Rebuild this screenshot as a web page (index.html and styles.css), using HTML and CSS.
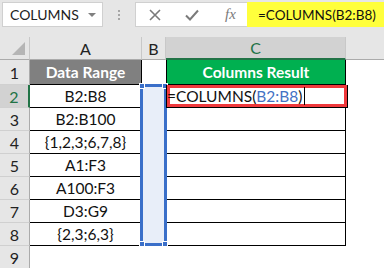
FILE: index.html
```html
<!DOCTYPE html>
<html lang="en">
<head>
    <meta charset="UTF-8">
    <title>COLUMNS</title>
    <link rel="stylesheet" href="styles.css">
</head>
<body>
    <div class="app">
        <!-- Formula bar -->
        <div class="formula-bar">
            <div class="name-box">
                <span>COLUMNS</span>
                <svg class="drop" width="8" height="4" viewBox="0 0 8 4"><path d="M0 0H8L4 4Z" fill="#808080"/></svg>
            </div>
            <div class="grip"><i></i><i></i><i></i></div>
            <div class="fx-box">
                <svg width="12" height="12" viewBox="0 0 12 12"><path d="M1 1L11 11M11 1L1 11" stroke="#7a7a7a" stroke-width="1.6" fill="none"/></svg>
                <svg width="14" height="12" viewBox="0 0 14 12"><path d="M1 6.5L5 10.5L13 1.5" stroke="#7a7a7a" stroke-width="2" fill="none"/></svg>
                <span class="fx">fx</span>
            </div>
            <div class="formula">=COLUMNS(B2:B8)</div>
        </div>

        <!-- Sheet -->
        <div class="sheet">
            <div class="hd corner"><span class="tri"></span></div>
            <div class="hd col">A</div>
            <div class="hd col">B</div>
            <div class="hd col active-col">C</div>
            <div class="hd rest"></div>

            <div class="rh">1</div>
            <div class="cell a title-grey">Data Range</div>
            <div class="cell b"></div>
            <div class="cell c title-green">Columns Result</div>
            <div class="cell rest"></div>

            <div class="rh active-row">2</div>
            <div class="cell a">B2:B8</div>
            <div class="sel">
                <span class="h tl"></span><span class="h tr"></span>
                <span class="h bl"></span><span class="h br"></span>
            </div>
            <div class="cell c editing">=COLUMNS(<span class="ref">B2:B8</span>)<span class="cursor"></span></div>
            <div class="cell rest"></div>

            <div class="rh">3</div>
            <div class="cell a">B2:B100</div>
            <div class="cell c"></div>
            <div class="cell rest"></div>

            <div class="rh">4</div>
            <div class="cell a">{1,2,3;6,7,8}</div>
            <div class="cell c"></div>
            <div class="cell rest"></div>

            <div class="rh">5</div>
            <div class="cell a">A1:F3</div>
            <div class="cell c"></div>
            <div class="cell rest"></div>

            <div class="rh">6</div>
            <div class="cell a">A100:F3</div>
            <div class="cell c"></div>
            <div class="cell rest"></div>

            <div class="rh">7</div>
            <div class="cell a">D3:G9</div>
            <div class="cell c"></div>
            <div class="cell rest"></div>

            <div class="rh">8</div>
            <div class="cell a">{2,3;6,3}</div>
            <div class="cell c"></div>
            <div class="cell rest"></div>

            <div class="rh">9</div>
            <div class="cell blank"></div>
            <div class="cell blank"></div>
            <div class="cell blank"></div>
            <div class="cell rest"></div>
        </div>
    </div>
</body>
</html>
```

FILE: styles.css
```css
body {
    margin: 0;
    font-family: Lato, "Open Sans", sans-serif;
    background-color: #ffffff;
}

.app {
    width: 384px;
    height: 268px;
    overflow: hidden;
    background-color: #e6e6e6;
}

/* Formula bar */
.formula-bar {
    display: flex;
    height: 25px;
    padding-top: 2px;
    margin-bottom: 10px;
}

.name-box {
    width: 101px;
    margin-left: 2px;
    box-sizing: border-box;
    background-color: white;
    border: 1px solid #d0d0d0;
    display: flex;
    align-items: center;
    justify-content: space-between;
    padding: 0 6px 0 7px;
    font-size: 14px;
    color: #222;
}

.grip {
    width: 32px;
    display: flex;
    flex-direction: column;
    align-items: center;
    justify-content: center;
    gap: 2px;
}

.grip i {
    width: 2px;
    height: 2px;
    background-color: #a6a6a6;
}

.fx-box {
    width: 112px;
    box-sizing: border-box;
    background-color: white;
    border: 1px solid #d0d0d0;
    border-right: none;
    display: flex;
    align-items: center;
    padding-left: 13px;
    gap: 24px;
}

.fx {
    font-family: "Liberation Serif", serif;
    font-style: italic;
    font-size: 15px;
    color: #7a7a7a;
    margin-left: 2px;
}

.formula {
    flex: 1;
    background-color: #ffff3c;
    display: flex;
    align-items: center;
    padding-left: 11px;
    font-size: 13.5px;
    color: #111;
}

/* Sheet grid */
.sheet {
    display: grid;
    grid-template-columns: 30px 112px 24px 180px 1fr;
    grid-template-rows: 23px 25px repeat(8, 23px);
    background-color: white;
}

.hd {
    background-color: #e6e6e6;
    border-right: 1px solid #c8c8c8;
    border-bottom: 1px solid #ababab;
    display: flex;
    align-items: center;
    justify-content: center;
    font-size: 16px;
    color: #222;
}

.corner {
    position: relative;
}

.tri {
    position: absolute;
    right: 4px;
    bottom: 4px;
    width: 0;
    height: 0;
    border-left: 13px solid transparent;
    border-bottom: 13px solid #b5b5b5;
}

.active-col {
    background-color: #d2d2d2;
    color: #217346;
    border-bottom: 2px solid #217346;
}

.hd.rest {
    border-right: none;
    background-color: #e6e6e6;
}

.rh {
    background-color: #e6e6e6;
    border-right: 1px solid #ababab;
    border-bottom: 1px solid #d0d0d0;
    display: flex;
    align-items: center;
    justify-content: center;
    font-size: 16px;
    color: #222;
}

.active-row {
    background-color: #d2d2d2;
    color: #217346;
    border-right: 2px solid #217346;
}

.cell {
    display: flex;
    align-items: center;
    justify-content: center;
    font-size: 15.5px;
    color: #111;
}

.cell.a {
    border-right: 1px solid #000;
    border-bottom: 1px solid #000;
}

.cell.c {
    border-left: 1px solid #000;
    border-right: 1px solid #000;
    border-bottom: 1px solid #000;
}

.title-grey {
    background-color: #808080;
    color: white;
    font-weight: bold;
}

.title-green {
    background-color: #00b050;
    color: white;
    font-weight: bold;
}

.editing {
    justify-content: flex-start;
    padding-left: 0;
    margin-right: -2px;
    box-shadow: inset 0 0 0 3px #f0393c;
    position: relative;
    z-index: 1;
}

.ref {
    color: #4472c4;
}

.cursor {
    width: 1px;
    height: 18px;
    background-color: #000;
    margin-left: 2px;
}

/* Referenced range B2:B8 */
.sel {
    grid-row: span 7;
    position: relative;
    margin: -1px -1px 0 -2px;
    border: 3px solid #3a6fc9;
    background-color: #e8eef9;
}

.h {
    position: absolute;
    width: 4px;
    height: 4px;
    background-color: #3a6fc9;
    border: 1px solid white;
}

.tl { left: -4px; top: -4px; }
.tr { right: -4px; top: -4px; }
.bl { left: -4px; bottom: -4px; }
.br { right: -4px; bottom: -4px; }
```
